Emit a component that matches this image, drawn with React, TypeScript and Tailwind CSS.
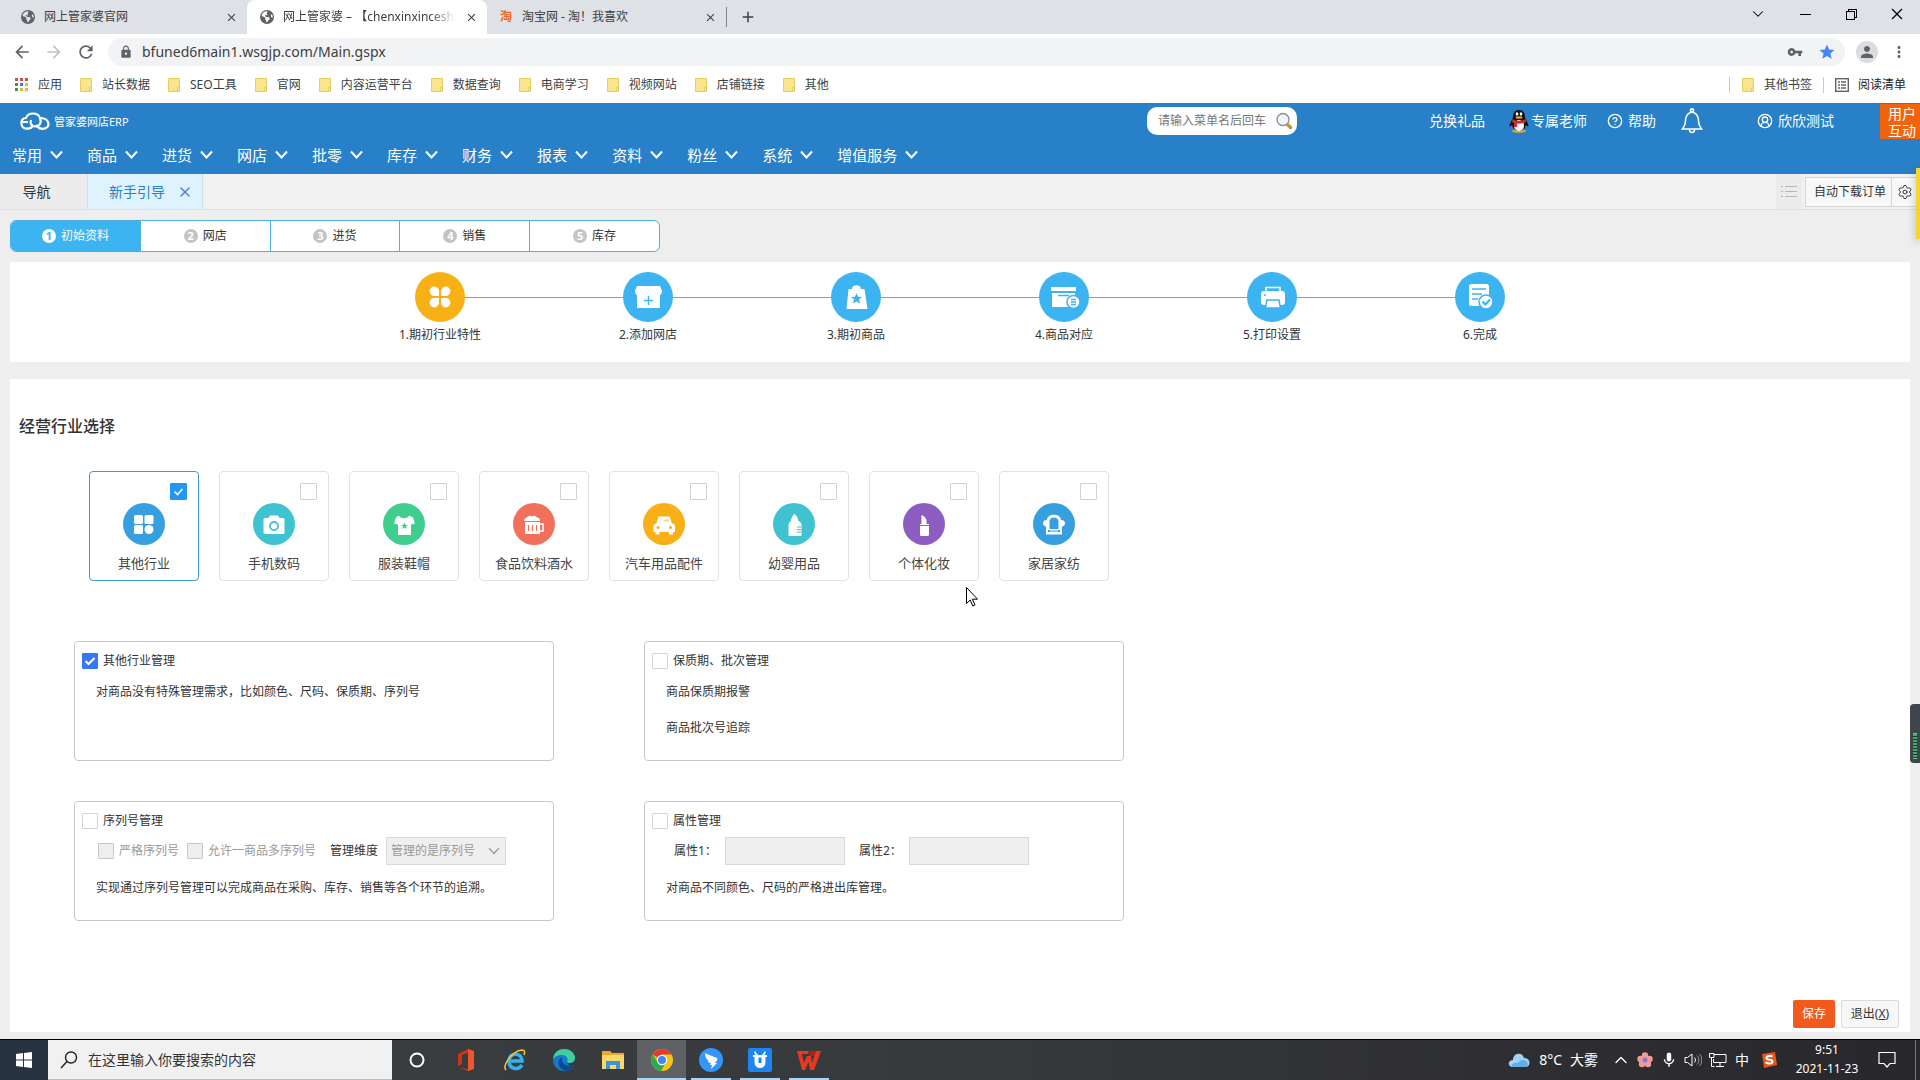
import React, { useState } from 'react';
import { CircleHelp, Settings, X, ChevronDown, ChevronUp, CircleUserRound } from 'lucide-react';
import { MdArrowBack, MdArrowForward, MdRefresh, MdLock, MdStar, MdVpnKey, MdMoreVert, MdPerson, MdMic, MdAdd, MdClose } from 'react-icons/md';
import { FaEarthAmericas } from 'react-icons/fa6';
import { VscChromeClose, VscChromeMinimize, VscChromeRestore } from 'react-icons/vsc';

const BOOKMARKS = ['站长数据', 'SEO工具', '官网', '内容运营平台', '数据查询', '电商学习', '视频网站', '店铺链接', '其他'];
const MENUS = ['常用', '商品', '进货', '网店', '批零', '库存', '财务', '报表', '资料', '粉丝', '系统', '增值服务'];
const STAGES = ['初始资料', '网店', '进货', '销售', '库存'];

const STEPS = [
  {
    label: '1.期初行业特性',
    bg: 'bg-[#f7b015]',
    icon: (
      <g fill="#fff">
        <path d="M24 24h-4.500a4.700 4.700 0 1 1 4.500-4.500z" />
        <path d="M26 24h4.500a4.700 4.700 0 1 0-4.500-4.500z" />
        <path d="M24 26h-4.500a4.700 4.700 0 1 0 4.500 4.500z" />
        <path d="M26 26h4.500a4.700 4.700 0 1 1-4.500 4.500z" />
      </g>
    )
  },
  {
    label: '2.添加网店',
    bg: 'bg-[#3db4f2]',
    icon: (
      <>
        <path fill="#fff" d="M14 14h23l2 5c0 2-1 4-2 4v12a1 1 0 0 1-1 1H15a1 1 0 0 1-1-1V23c-1 0-2-2-2-4z" />
        <path stroke="#3db4f2" strokeWidth="1.500" d="M25.500 24v9M21 28.500h9" />
      </>
    )
  },
  {
    label: '3.期初商品',
    bg: 'bg-[#3db4f2]',
    icon: (
      <>
        <path fill="#fff" d="M17.500 17H21c0-5 9-5 9 0h3.500l3 20h-21z" />
        <path fill="#3db4f2" d="M25.500 21l1.500 3.700 4 .3-3 2.600 1 3.900-3.500-2.100-3.500 2.100 1-3.900-3-2.600 4-.3z" />
      </>
    )
  },
  {
    label: '4.商品对应',
    bg: 'bg-[#3db4f2]',
    icon: (
      <>
        <path fill="#fff" d="M12 15h25v4H12zM13 21h23v14H13z" />
        <path stroke="#3db4f2" strokeWidth="1.500" d="M19 23.500h11" />
        <circle cx="34.500" cy="30" r="6.500" fill="#fff" stroke="#3db4f2" strokeWidth="1.500" />
        <path stroke="#3db4f2" strokeWidth="1.300" d="M32 27.500h5M32 30h5M32 32.500h5" />
      </>
    )
  },
  {
    label: '5.打印设置',
    bg: 'bg-[#3db4f2]',
    icon: (
      <>
        <path fill="none" stroke="#fff" strokeWidth="1.500" d="M19 20v-4.500h14V20" />
        <rect x="14" y="19" width="24" height="14" rx="3" fill="#fff" />
        <circle cx="18" cy="23" r="1" fill="#3db4f2" />
        <path fill="#fff" stroke="#3db4f2" strokeWidth="1.500" d="M20 28h12l1.500 8h-15z" />
      </>
    )
  },
  {
    label: '6.完成',
    bg: 'bg-[#3db4f2]',
    icon: (
      <>
        <rect x="14" y="12" width="20" height="22" rx="2.500" fill="#fff" />
        <path stroke="#3db4f2" strokeWidth="1.500" d="M17 17h14M17 22h10M17 27h6" />
        <circle cx="31" cy="30" r="7" fill="#fff" stroke="#3db4f2" strokeWidth="1.500" />
        <path fill="none" stroke="#3db4f2" strokeWidth="2" d="M27.500 29.500l3 3 4.500-5" />
      </>
    )
  }
];

const INDUSTRIES = [
  {
    name: '其他行业',
    bg: 'bg-[#369fe0]',
    icon: (
      <g fill="#fff">
        <rect x="11" y="12" width="9" height="9" rx="1.500" />
        <rect x="21.500" y="12" width="9" height="9" rx="1.500" />
        <rect x="11" y="22" width="9" height="9" rx="1.500" />
        <circle cx="26" cy="26.500" r="4.500" />
      </g>
    )
  },
  {
    name: '手机数码',
    bg: 'bg-[#40c3d1]',
    icon: (
      <>
        <path fill="#fff" d="M12 15h3.500l1.500-2.500h8l1.500 2.500H30a1.500 1.500 0 0 1 1.500 1.500v13A1.500 1.500 0 0 1 30 31H12a1.500 1.500 0 0 1-1.500-1.500v-13A1.500 1.500 0 0 1 12 15z" />
        <circle cx="21" cy="23" r="4" fill="none" stroke="#40c3d1" strokeWidth="1.800" />
      </>
    )
  },
  {
    name: '服装鞋帽',
    bg: 'bg-[#3fce8e]',
    icon: (
      <>
        <path fill="#fff" d="M16 12.500c1 3.500 9 3.500 10 0l4 2 2 6-4 1v10.500H15V21.500l-4-1 2-6z" />
        <path fill="#3fce8e" d="M21.500 19.500l1 2.200 2.400.2-1.800 1.600.6 2.400-2.200-1.300-2.200 1.300.6-2.400-1.800-1.600 2.400-.2z" />
      </>
    )
  },
  {
    name: '食品饮料酒水',
    bg: 'bg-[#f0705c]',
    icon: (
      <>
        <path fill="#fff" d="M11 18c0-2 1.500-3.500 3-3.500 1-2 4-2 5-1 1-1 4-1 5 1 2 0 3 1.500 3 3.500zM12 19h15v12H12z" />
        <path fill="none" stroke="#fff" strokeWidth="1.500" d="M27 21h3v7h-3" />
        <path stroke="#f0705c" strokeWidth="1.200" d="M15.500 22v6M19.500 22v6M23.500 22v6" />
      </>
    )
  },
  {
    name: '汽车用品配件',
    bg: 'bg-[#f7b015]',
    icon: (
      <>
        <path fill="#fff" d="M15.500 13.500h11l2.500 7c2 0 3 1.500 3 3V29h-2v2.500h-4V29h-9.500v2.500h-4V29h-2v-5.500c0-1.500 1-3 3-3z" />
        <g fill="#f7b015">
          <circle cx="15" cy="24.500" r="1.500" />
          <circle cx="27.500" cy="24.500" r="1.500" />
          <path d="M20 18.500c1-2 3-2.500 6-2v2z" opacity=".5" />
        </g>
      </>
    )
  },
  {
    name: '幼婴用品',
    bg: 'bg-[#40c3d1]',
    icon: (
      <>
        <path fill="#fff" d="M21.500 11c1.500 1 4 4.500 4 7 2 1 3 2 3 4v10a1 1 0 0 1-1 1h-11a1 1 0 0 1-1-1V22c0-2 1-3 2.500-4 0-2.500 2-6 3.500-7z" />
        <path stroke="#40c3d1" strokeWidth="1" d="M24 24h4M24 26.500h4M24 29h4" />
      </>
    )
  },
  {
    name: '个体化妆',
    bg: 'bg-[#8d5dc1]',
    icon: (
      <>
        <path fill="#fff" d="M18.500 21v-9c3 1 5 3.500 5 6v3zM17 21h9v10.500a1.500 1.500 0 0 1-1.500 1.500h-6a1.500 1.500 0 0 1-1.500-1.500z" />
        <path stroke="#8d5dc1" strokeWidth="1" d="M17 22.500h9" />
      </>
    )
  },
  {
    name: '家居家纺',
    bg: 'bg-[#369fe0]',
    icon: (
      <>
        <path fill="#fff" d="M14 17c0-7 14-7 14 0 2-.5 4 1 4 3s-1.500 3.500-3 3.500V31.500H13v-8c-1.500 0-3-1.500-3-3.500s2-3.500 4-3z" />
        <path fill="#369fe0" d="M16.500 18.500c0-5.500 9-5.500 9 0V26h-9zM15 27h12v2H15z" />
        <path stroke="#fff" d="M15 26.500h12M17 28h8" />
      </>
    )
  }
];

function Tick({ label, defaultChecked, disabled }: { label: string; defaultChecked?: boolean; disabled?: boolean }) {
  return (
    <label className="flex items-center gap-[5px]">
      <span className="grid">
        <input
          type="checkbox"
          defaultChecked={defaultChecked}
          disabled={disabled}
          className="peer col-start-1 row-start-1 w-4 h-4 appearance-none border border-[#d4d4d4] rounded-[1px] bg-white checked:bg-[#3478f6] checked:border-[#3478f6] disabled:bg-[#eee] disabled:border-[#c8c8c8]"
        />
        <svg viewBox="0 0 16 16" className="col-start-1 row-start-1 w-4 h-4 pointer-events-none hidden peer-checked:block">
          <path d="M3.500 8l3 3 6-6" fill="none" stroke="#fff" strokeWidth="2" />
        </svg>
      </span>
      <span className={disabled ? 'text-[#999]' : ''}>{label}</span>
    </label>
  );
}

function Folder() {
  return (
    <svg viewBox="0 0 12 14" className="w-3 h-[14px]">
      <path d="M.5.500h11v13H.5z" fill="#fbe58c" stroke="#e6cf5c" />
      <path d="M9.500 9.500h2v4h-2z" fill="#fbe58c" stroke="#e6cf5c" />
    </svg>
  );
}

function BrowserTabs() {
  return (
    <div className="flex h-[34px] bg-[#dee1e6] text-[#3c4043]">
      <div className="flex items-center w-[247px] pl-[21px] pr-2">
        <FaEarthAmericas className="w-[14px] h-[14px] text-[#5f6368]" />
        <span className="ml-[9px] flex-1">网上管家婆官网</span>
        <button aria-label="关闭" className="p-px"><MdClose className="w-[13px] h-[13px]" /></button>
      </div>
      <div className="flex items-center w-[240px] pl-[13px] pr-2 bg-white rounded-t-lg">
        <FaEarthAmericas className="w-[14px] h-[14px] text-[#5f6368]" />
        <span className="ml-[9px] flex-1 overflow-hidden whitespace-nowrap [mask-image:linear-gradient(to_right,#000_85%,transparent)]">
          网上管家婆 – 【chenxinxinceshi
        </span>
        <button aria-label="关闭" className="p-px ml-2"><MdClose className="w-[13px] h-[13px]" /></button>
      </div>
      <div className="flex items-center w-[239px] pl-3 pr-2">
        <span className="w-[14px] h-[14px] text-center leading-[14px] font-bold text-[#f26522]">淘</span>
        <span className="ml-[9px] flex-1">淘宝网 - 淘！我喜欢</span>
        <button aria-label="关闭" className="p-px"><MdClose className="w-[13px] h-[13px]" /></button>
      </div>
      <div className="flex items-center">
        <span className="w-px h-5 bg-[#80868b]" />
        <button aria-label="新标签页" className="ml-3"><MdAdd className="w-[18px] h-[18px]" /></button>
      </div>
      <div className="ml-auto flex items-center gap-[30px] pr-[15px] pb-[6px] text-black">
        <button aria-label="搜索标签页"><ChevronDown className="w-[18px] h-[18px]" strokeWidth={1.4} /></button>
        <button aria-label="最小化"><VscChromeMinimize className="w-4 h-4" /></button>
        <button aria-label="还原"><VscChromeRestore className="w-4 h-4" /></button>
        <button aria-label="关闭窗口"><VscChromeClose className="w-4 h-4" /></button>
      </div>
    </div>
  );
}

function AddressBar() {
  return (
    <div className="flex items-center h-9 pl-3 pr-3 bg-white text-[#5f6368]">
      <button aria-label="后退"><MdArrowBack className="w-5 h-5" /></button>
      <button aria-label="前进" className="ml-3 text-[#bdc1c6]"><MdArrowForward className="w-5 h-5" /></button>
      <button aria-label="刷新" className="ml-3"><MdRefresh className="w-5 h-5" /></button>
      <div className="flex items-center flex-1 h-7 ml-3 pl-[11px] pr-[9px] rounded-full bg-[#f1f3f4]">
        <MdLock className="w-[14px] h-[14px]" />
        <input
          aria-label="地址"
          defaultValue="bfuned6main1.wsgjp.com/Main.gspx"
          className="flex-1 ml-[9px] bg-transparent text-sm text-[#3c4043] outline-none"
        />
        <button aria-label="密码"><MdVpnKey className="w-4 h-4" /></button>
        <button aria-label="收藏" className="ml-[15px] text-[#4285f4]"><MdStar className="w-[18px] h-[18px]" /></button>
      </div>
      <button aria-label="用户" className="ml-[11px] flex items-center justify-center w-[22px] h-[22px] rounded-full bg-[#dadce0]">
        <MdPerson className="w-[18px] h-[18px]" />
      </button>
      <button aria-label="菜单" className="ml-3"><MdMoreVert className="w-[18px] h-[18px]" /></button>
    </div>
  );
}

function BookmarkBar() {
  const dots = ['#c5524a', '#c5524a', '#c5524a', '#3f8f5b', '#3b78e7', '#e2b53c', '#3f8f5b', '#e2b53c', '#e2b53c'];
  return (
    <div className="flex items-center h-[33px] pl-[15px] pr-[14px] pb-1 bg-white text-[#3c4043]">
      <a href="#apps" className="flex items-center gap-[9px] mr-[18px]">
        <svg viewBox="0 0 14 14" className="w-[14px] h-[14px]">
          {dots.map((c, i) => (
            <rect key={i} x={(i % 3) * 5} y={Math.floor(i / 3) * 5} width="3" height="3" fill={c} />
          ))}
        </svg>
        应用
      </a>
      {BOOKMARKS.map((b) => (
        <a key={b} href="#bookmark" className="flex items-center gap-[10px] mr-[18px] whitespace-nowrap">
          <Folder />
          {b}
        </a>
      ))}
      <div className="ml-auto flex items-center whitespace-nowrap">
        <span className="w-px h-4 bg-[#c8cacd] mr-3" />
        <a href="#other" className="flex items-center gap-[10px]"><Folder />其他书签</a>
        <span className="w-px h-4 bg-[#c8cacd] mx-[11px]" />
        <a href="#reading" className="flex items-center gap-[9px]">
          <svg viewBox="0 0 14 14" className="w-[14px] h-[14px]" fill="none" stroke="#5f6368">
            <rect x=".7" y=".7" width="12.600" height="12.600" strokeWidth="1.400" />
            <path d="M3 4h2M6 4h5M3 7h2M6 7h5M3 10h2M6 10h5" strokeWidth="1.400" />
          </svg>
          <span className="text-[#202124]">阅读清单</span>
        </a>
      </div>
    </div>
  );
}

function Penguin() {
  return (
    <svg viewBox="0 0 20 24" className="w-5 h-6">
      <ellipse cx="10" cy="22" rx="7" ry="1.800" fill="#e9a23b" />
      <path fill="#111" d="M10 1c-4.500 0-6 3.500-6 7 0 2-3 5-3.500 9 .5 1 1.500 0 2.500-1 1 4 4 6 7 6s6-2 7-6c1 1 2 2 2.500 1C19 13 16 10 16 8c0-3.500-1.500-7-6-7z" />
      <ellipse cx="10" cy="16.500" rx="5" ry="5.500" fill="#fff" />
      <ellipse cx="8" cy="5" rx="1.300" ry="1.800" fill="#fff" />
      <ellipse cx="12" cy="5" rx="1.300" ry="1.800" fill="#fff" />
      <ellipse cx="10" cy="8.500" rx="3.500" ry="1.200" fill="#f3a61c" />
      <path fill="#d9262b" d="M3.500 10c4 2.500 9 2.500 13 0l.5 3c-3 1.500-6 2-9 1.500V18H5v-4l-2-1z" />
    </svg>
  );
}

function AppHeader() {
  return (
    <header className="h-[71px] bg-[#2880c8] text-white">
      <div className="flex items-center h-9 pl-5">
        <svg viewBox="0 0 30 18" className="w-[30px] h-[18px]" fill="none" stroke="#fff" strokeWidth="2.200">
          <path d="M8 10H2M13 13c-2 5-11 5-11.500-1C1 8 3 6 6 6c2-6 12-6 14 0 3 0 8 1 8.500 6 0 4-5 6-9 4" />
          <path d="M20 6c2 5-1 10-7 8-2-1-3-3-2-6M16 13l4 4" />
        </svg>
        <span className="ml-1 pt-[3px] text-[11px]">管家婆网店ERP</span>
        <div className="ml-auto flex items-center w-[150px] h-7 mr-[132px] pl-[11px] pr-1 bg-white rounded-[10px]">
          <input aria-label="搜索菜单" placeholder="请输入菜单名后回车" className="w-[114px] text-xs placeholder:text-[#777] outline-none" />
          <button aria-label="搜索" className="ml-auto">
            <svg viewBox="0 0 18 18" className="w-[18px] h-[18px]">
              <path d="M11.500 11.500l4 4" stroke="#c9962c" strokeWidth="3.500" strokeLinecap="round" />
              <circle cx="8" cy="7.500" r="6" fill="#eef5fb" stroke="#8a8f96" strokeWidth="1.300" />
            </svg>
          </button>
        </div>
        <div className="flex items-center text-sm whitespace-nowrap">
          <a href="#gift">兑换礼品</a>
          <a href="#teacher" className="flex items-center ml-6 gap-[2px]"><Penguin />专属老师</a>
          <a href="#help" className="flex items-center ml-5 gap-[5px]"><CircleHelp className="w-4 h-4" />帮助</a>
          <button aria-label="通知" className="ml-[25px]">
            <svg viewBox="0 0 22 26" className="w-[22px] h-[26px]" fill="none" stroke="#fff" strokeWidth="1.600">
              <circle cx="11" cy="2.500" r="1.600" />
              <path d="M11 4C6 5 4.500 9 4.500 13c0 4-1.500 6-3 8h19c-1.500-2-3-4-3-8 0-4-1.500-8-6.500-9zM8.500 21.500c0 4 5 4 5 0" />
            </svg>
          </button>
          <a href="#user" className="flex items-center ml-[54px] gap-[5px]"><CircleUserRound className="w-4 h-4" />欣欣测试</a>
          <a href="#feedback" className="ml-[46px] w-10 h-[35px] self-start pl-2 pt-px bg-[#f2640c] leading-[17px] whitespace-normal">用户互动</a>
        </div>
      </div>
      <nav className="flex items-center gap-6 h-8 pl-3 text-[15px]">
        {MENUS.map((m) => (
          <button key={m} className="flex items-center gap-2 whitespace-nowrap">
            {m}
            <svg viewBox="0 0 13 9" className="w-[13px] h-[9px]">
              <path d="M1 1.500l5.500 6 5.500-6" fill="none" stroke="#fff" strokeWidth="2" />
            </svg>
          </button>
        ))}
      </nav>
    </header>
  );
}

function PageTabs() {
  return (
    <div className="flex h-9 bg-[#f1f1f1] border-b border-[#dfdfdf] text-sm text-[#333]">
      <button className="w-[88px] pr-[14px] bg-[#ececec] border-r border-[#dcdcdc]">导航</button>
      <div className="flex items-center w-[115px] pl-[21px] bg-[#dff3ff] border-r border-[#d0dfe8] text-[#2880c8]">
        新手引导
        <button aria-label="关闭标签" className="ml-3"><X className="w-4 h-4 text-[#4a7fd6]" /></button>
      </div>
      <div className="ml-auto flex items-center text-xs">
        <button aria-label="列表" className="flex items-center justify-center w-[26px] h-full mr-[3px] bg-[#ececec]">
          <svg viewBox="0 0 18 14" className="w-[18px] h-[14px]" stroke="#b8b8b8">
            <path d="M1 1.500h2M5 1.500h12M1 6.500h2M5 6.500h12M1 11.500h2M5 11.500h12" />
          </svg>
        </button>
        <button className="w-[87px] h-[30px] pl-[3px] border border-[#d4d4d4] bg-[#f8f8f8]">自动下载订单</button>
        <button aria-label="设置" className="flex items-center w-[28px] h-[30px] pl-[5px] border-y border-[#d4d4d4] bg-[#f8f8f8]">
          <Settings className="w-4 h-4" strokeWidth={1.5} />
        </button>
      </div>
    </div>
  );
}

function Industries() {
  const [selected, setSelected] = useState('其他行业');

  return (
    <div className="flex flex-wrap gap-5 mt-[33px] ml-[79px]">
      {INDUSTRIES.map((item) => {
        const on = selected === item.name;
        return (
          <label
            key={item.name}
            className={`flex flex-col items-center w-[110px] h-[110px] border rounded ${on ? 'border-[#3d9bd0]' : 'border-[#e2e2e2]'}`}
          >
            <span className="grid self-end mt-[11px] mr-[11px]">
              <input
                type="checkbox"
                checked={on}
                onChange={() => setSelected(item.name)}
                className="peer col-start-1 row-start-1 w-[17px] h-[17px] appearance-none border border-[#d0d0d0] rounded-[1px] bg-white checked:bg-[#2196f3] checked:border-[#2196f3]"
              />
              <svg viewBox="0 0 17 17" className="col-start-1 row-start-1 w-[17px] h-[17px] pointer-events-none hidden peer-checked:block">
                <path d="M4.500 8.500l3 3 5-5.500" fill="none" stroke="#fff" strokeWidth="1.600" />
              </svg>
            </span>
            <span className={`w-[42px] h-[42px] mt-[3px] rounded-full ${item.bg}`}>
              <svg viewBox="0 0 42 42">{item.icon}</svg>
            </span>
            <span className="mt-2 text-[13px] leading-5 text-[#444]">{item.name}</span>
          </label>
        );
      })}
    </div>
  );
}

function ManageBoxes() {
  const box = 'h-[120px] px-[7px] pt-[9px] border border-[#c8c8c8] rounded leading-5';
  return (
    <div className="grid grid-cols-[480px_480px] gap-x-[90px] gap-y-10 mt-[60px] ml-16 text-[#333]">
      <section className={box}>
        <Tick label="其他行业管理" defaultChecked />
        <p className="mt-[11px] ml-[14px]">对商品没有特殊管理需求，比如颜色、尺码、保质期、序列号</p>
      </section>
      <section className={box}>
        <Tick label="保质期、批次管理" />
        <p className="mt-[11px] ml-[14px]">商品保质期报警</p>
        <p className="mt-4 ml-[14px]">商品批次号追踪</p>
      </section>
      <section className={box}>
        <Tick label="序列号管理" />
        <div className="flex items-center mt-[6px] ml-4 gap-2">
          <Tick label="严格序列号" disabled />
          <Tick label="允许一商品多序列号" disabled />
          <label htmlFor="dimension" className="ml-[6px]">管理维度</label>
          <div className="grid items-center">
            <select id="dimension" disabled className="col-start-1 row-start-1 w-[120px] h-7 pl-1 appearance-none border border-[#d9d9d9] bg-[#efeff0] text-[#999] opacity-100">
              <option>管理的是序列号</option>
            </select>
            <svg viewBox="0 0 12 8" className="col-start-1 row-start-1 justify-self-end w-3 h-2 mr-[6px] pointer-events-none">
              <path d="M1 1l5 5.500L11 1" fill="none" stroke="#999" strokeWidth="1.200" />
            </svg>
          </div>
        </div>
        <p className="mt-[13px] ml-[14px]">实现通过序列号管理可以完成商品在采购、库存、销售等各个环节的追溯。</p>
      </section>
      <section className={box}>
        <Tick label="属性管理" />
        <div className="flex items-center mt-[6px] ml-[22px]">
          <label htmlFor="attr1" className="w-[51px] whitespace-nowrap">属性1：</label>
          <input id="attr1" disabled className="w-[120px] h-7 border border-[#d9d9d9] bg-[#efeff0]" />
          <label htmlFor="attr2" className="w-[50px] ml-[14px] whitespace-nowrap">属性2：</label>
          <input id="attr2" disabled className="w-[120px] h-7 border border-[#d9d9d9] bg-[#efeff0]" />
        </div>
        <p className="mt-[13px] ml-[14px]">对商品不同颜色、尺码的严格进出库管理。</p>
      </section>
    </div>
  );
}

const TASK_APPS = [
  {
    name: 'Cortana',
    state: '',
    icon: <circle cx="12" cy="12" r="6.500" fill="none" stroke="#fff" strokeWidth="2" />
  },
  {
    name: 'Office',
    state: '',
    icon: (
      <>
        <path d="M4 6l10-5 6 2v18l-6 2-9-3 9 1V5L8 7v9l-4 2z" fill="#c9341a" />
        <path d="M14 1l6 2v18l-6 2z" fill="#f0562b" />
      </>
    )
  },
  {
    name: 'Internet Explorer',
    state: '',
    icon: (
      <>
        <path d="M19 17c-4 6-13 4-13-4 0-9 13-9 13 0H8" fill="none" stroke="#35b2ee" strokeWidth="3.600" />
        <path d="M3 22c-4-4 6-19 16-20 3 0 3 2 2 5" fill="none" stroke="#f2c63c" strokeWidth="1.600" />
      </>
    )
  },
  {
    name: 'Edge',
    state: '',
    icon: (
      <>
        <path d="M1 12C1 5 6 1 12 1s11 4 11 9c0 5-6 6-8 4 1 4 4 5 7 3-2 4-6 6-10 6C6 23 1 18 1 12z" fill="#1779cc" />
        <path d="M1 11C2 4 7 1 12 1c7 0 11 5 11 9 0 5-6 6-8 4 2-4-1-7-5-7-4 0-8 2-9 4z" fill="#3fcf9d" />
        <path d="M10 9c-6 3-4 12 4 14 4-1 7-3 8-6-7 3-13-1-12-8z" fill="#0c4a94" />
      </>
    )
  },
  {
    name: '文件资源管理器',
    state: '',
    icon: (
      <>
        <path d="M1 3h8l2 2h12v16H1z" fill="#e8a92c" />
        <path d="M1 7h22v14H1z" fill="#fbd867" />
        <path d="M5 21v-8h14v8h-4v-4H9v4z" fill="#3d96dc" />
      </>
    )
  },
  {
    name: 'Chrome',
    state: 'active',
    icon: (
      <>
        <circle cx="12" cy="12" r="11" fill="#fbc116" />
        <path d="M12 12L2.500 6.500A11 11 0 0 1 21.500 6.500H12z" fill="#e33b2e" />
        <path d="M2.500 6.500A11 11 0 0 0 11 23l5-8.500-8 0z" fill="#2da94f" />
        <circle cx="12" cy="12" r="5.200" fill="#fff" />
        <circle cx="12" cy="12" r="4" fill="#4285f4" />
      </>
    )
  },
  {
    name: '钉钉',
    state: 'open',
    icon: (
      <>
        <circle cx="12" cy="12" r="12" fill="#3296fa" />
        <path d="M6 5c3 2 8 3 12 5 1 2-1 4-2 5h2l-6 6 1-4h-2l1-2c-3 0-3-2-3-3-2-1-3-4-3-7z" fill="#fff" />
      </>
    )
  },
  {
    name: 'U助手',
    state: 'open',
    icon: (
      <>
        <rect width="24" height="24" rx="2" fill="#1d86ee" />
        <path d="M5 7h14v2h-1.500v5.500a5.500 5.500 0 0 1-11 0V9H5z" fill="#fff" />
        <path d="M7 3.500c0 2 1 3 2.500 3.500M17 3.500c0 2-1 3-2.500 3.500" fill="none" stroke="#fff" strokeWidth="1.500" />
        <path d="M10.500 9.500h3v5.500h-3z" fill="#1d86ee" />
      </>
    )
  },
  {
    name: 'WPS',
    state: 'open',
    icon: (
      <>
        <path d="M0 3h12l-1 3H5l2 9 3-7h4l1 7 4-12h5l-7 19h-4l-1.500-8L8 22H5z" fill="#e8391f" />
        <path d="M13 3h6l-2 5h-5z" fill="#b61f12" />
      </>
    )
  }
];

function Taskbar() {
  return (
    <footer className="flex h-[41px] border-t border-black bg-linear-to-r from-[#3b3f42] via-[#37393c] to-[#28272c] text-white">
      <button aria-label="开始" className="flex items-center justify-center w-12 bg-[#273341]">
        <svg viewBox="0 0 16 16" className="w-4 h-4" fill="#fff">
          <path d="M0 2l7-1v6.500H0zM8 .9L16 0v7.500H8zM0 8.500h7V15l-7-1zM8 8.500h8V16l-8-1z" />
        </svg>
      </button>
      <div className="flex items-center w-[344px] pl-3 bg-[#f1f1f1] border-b border-[#bbb]">
        <svg viewBox="0 0 18 18" className="w-[18px] h-[18px]" fill="none" stroke="#222" strokeWidth="1.400">
          <circle cx="11" cy="6.500" r="5.500" />
          <path d="M7 10.500L1 17" />
        </svg>
        <input aria-label="搜索" placeholder="在这里输入你要搜索的内容" className="w-[280px] ml-[10px] text-sm placeholder:text-[#333] outline-none" />
      </div>
      <div className="flex">
        {TASK_APPS.map((app) => (
          <button
            key={app.name}
            aria-label={app.name}
            className={`flex items-center justify-center w-[49px] ${app.state === 'active' ? 'bg-[#5f6264]' : ''}`}
          >
            <span
              className={`flex items-center justify-center h-full ${app.state === 'active' ? 'w-full' : 'w-10'} ${app.state ? 'border-b-2 border-[#a9d6f5] pt-[2px]' : ''}`}
            >
              <svg viewBox="0 0 24 24" className="w-6 h-6">{app.icon}</svg>
            </span>
          </button>
        ))}
      </div>
      <div className="ml-auto flex items-center whitespace-nowrap">
        <svg viewBox="0 0 22 15" className="w-[22px] h-[15px]">
          <path d="M4 14C-1 13 0 7 5 7c0-8 10-8 11-2 7 0 7 8 2 9z" fill="#9fd2f5" />
          <path d="M4 14c-2-3 3-5 6-4 3-5 10-3 10 2l-2 2z" fill="#64aee4" />
        </svg>
        <span className="ml-[9px] text-sm">8°C</span>
        <span className="ml-2 text-sm">大雾</span>
        <ChevronUp className="w-5 h-5 ml-[13px]" strokeWidth={1.6} />
        <svg viewBox="0 0 16 16" className="w-4 h-4 ml-[6px]">
          <g fill="#f29a9a">
            <circle cx="8" cy="3.500" r="3.200" />
            <circle cx="12.500" cy="7" r="3.200" />
            <circle cx="11" cy="12" r="3.200" />
            <circle cx="5" cy="12" r="3.200" />
            <circle cx="3.500" cy="7" r="3.200" />
          </g>
          <circle cx="8" cy="8" r="2.500" fill="#7c7fc0" />
        </svg>
        <MdMic className="w-[18px] h-[18px] ml-[7px]" />
        <svg viewBox="0 0 18 16" className="w-[18px] h-4 ml-[6px]" fill="none" stroke="#fff">
          <path d="M1 5.500h2.500L8 2v12l-4.500-3.500H1z" />
          <path d="M10.500 5.500c1.300 1.500 1.300 3.500 0 5" />
          <path d="M13 3.500c2.500 2.500 2.500 6.500 0 9M15.500 2c3 3.500 3 8.500 0 12" opacity=".5" />
        </svg>
        <svg viewBox="0 0 18 16" className="w-[18px] h-4 ml-[7px]" fill="none" stroke="#fff">
          <path d="M5 2.500h12v8H4.500V7M11 10.500v3.500M7 14.500h8M.5 1.500H5v4H.5zM2.500 5.500v9h3" />
        </svg>
        <span className="ml-2 text-sm">中</span>
        <svg viewBox="0 0 16 16" className="w-4 h-4 ml-3">
          <path d="M1 2l13-2 2 13-13 3z" fill="#e8541a" />
          <path d="M11.500 4.500c-3-1.500-7 0-6 2s6 .5 6 3-4 2.500-7 1" fill="none" stroke="#fff" strokeWidth="2" />
        </svg>
        <div className="ml-4 w-[68px] pb-[2px] text-center text-xs leading-[19px]">
          <div>9:51</div>
          <div>2021-11-23</div>
        </div>
        <svg viewBox="0 0 18 18" className="w-[18px] h-[18px] ml-[17px]" fill="none" stroke="#fff" strokeWidth="1.200">
          <path d="M1 1.500h16v11h-5l-3 3.500-3-3.500H1z" />
        </svg>
        <span className="w-px h-10 ml-[19px] mr-1 bg-[#77777a]" />
      </div>
    </footer>
  );
}

export default function App() {
  return (
    <div className="relative flex flex-col min-h-screen overflow-hidden bg-[#eee] text-xs font-['Noto_Sans','Noto_Sans_CJK_SC',sans-serif]">
      <BrowserTabs />
      <AddressBar />
      <BookmarkBar />
      <AppHeader />
      <PageTabs />

      <main className="flex flex-col flex-1 px-[10px] pt-[10px] pb-[7px]">
        {/* Stage switcher */}
        <div className="flex w-[650px] h-8 border border-[#4fb0e0] rounded-md overflow-hidden bg-white text-[#333]">
          {STAGES.map((s, i) => (
            <button
              key={s}
              className={`flex flex-1 items-center justify-center gap-[5px] ${i === 0 ? 'bg-[#3db4f2] text-white' : 'border-l border-[#4fb0e0]'}`}
            >
              <span
                className={`w-[14px] h-[14px] rounded-full text-[11px] leading-[14px] font-bold ${i === 0 ? 'bg-white text-[#3db4f2]' : 'bg-[#c4c4c4] text-white'}`}
              >
                {i + 1}
              </span>
              {s}
            </button>
          ))}
        </div>

        {/* Setup steps */}
        <ol className="flex justify-center h-[100px] mt-[10px] pt-[10px] bg-white text-[#333]">
          {STEPS.map((step, i) => (
            <li key={step.label} className="flex flex-col items-center w-[208px]">
              <div className="flex items-center w-full">
                <span className={`flex-1 h-px ${i > 0 ? 'bg-[#999]' : ''}`} />
                <span className={`w-[50px] h-[50px] rounded-full ${step.bg}`}>
                  <svg viewBox="0 0 50 50">{step.icon}</svg>
                </span>
                <span className={`flex-1 h-px ${i < STEPS.length - 1 ? 'bg-[#999]' : ''}`} />
              </div>
              <span className="mt-1 leading-[18px]">{step.label}</span>
            </li>
          ))}
        </ol>

        <div className="flex flex-col flex-1 mt-[17px] bg-white">
          <h2 className="mt-[35px] ml-[9px] text-base leading-6 font-medium text-[#333]">经营行业选择</h2>
          <Industries />
          <ManageBoxes />
          <div className="flex justify-end gap-[6px] mt-auto mb-1 pr-[11px]">
            <button className="w-[42px] h-7 rounded-[2px] bg-[#f25a1d] text-white">保存</button>
            <button className="w-[58px] h-7 rounded-[2px] border border-[#dcdcdc] bg-[#f7f7f7] text-[#333]">退出(<u>X</u>)</button>
          </div>
        </div>
      </main>

      <Taskbar />

      {/* Floating handles on the right edge */}
      <div className="absolute right-0 top-[168px] w-1 h-[71px] bg-[#f5d433] shadow-[0_2px_8px_rgba(0,0,0,0.3)]" />
      <div className="absolute right-0 top-[704px] flex flex-col justify-end items-center w-[10px] h-[59px] pb-1 rounded-l bg-[#3f454d]">
        <span className="w-1 h-[26px] border-y border-[#6fd08c] bg-[repeating-linear-gradient(#3fae62_0_2px,#2c3138_2px_3px)]" />
      </div>

      <svg viewBox="0 0 12 20" className="absolute left-[966px] top-[587px] w-3 h-5 pointer-events-none">
        <path d="M.5.500v16l3.700-3.500 2.600 6 2.200-1-2.600-5.800h5.100z" fill="#fff" stroke="#000" />
      </svg>
    </div>
  );
}
